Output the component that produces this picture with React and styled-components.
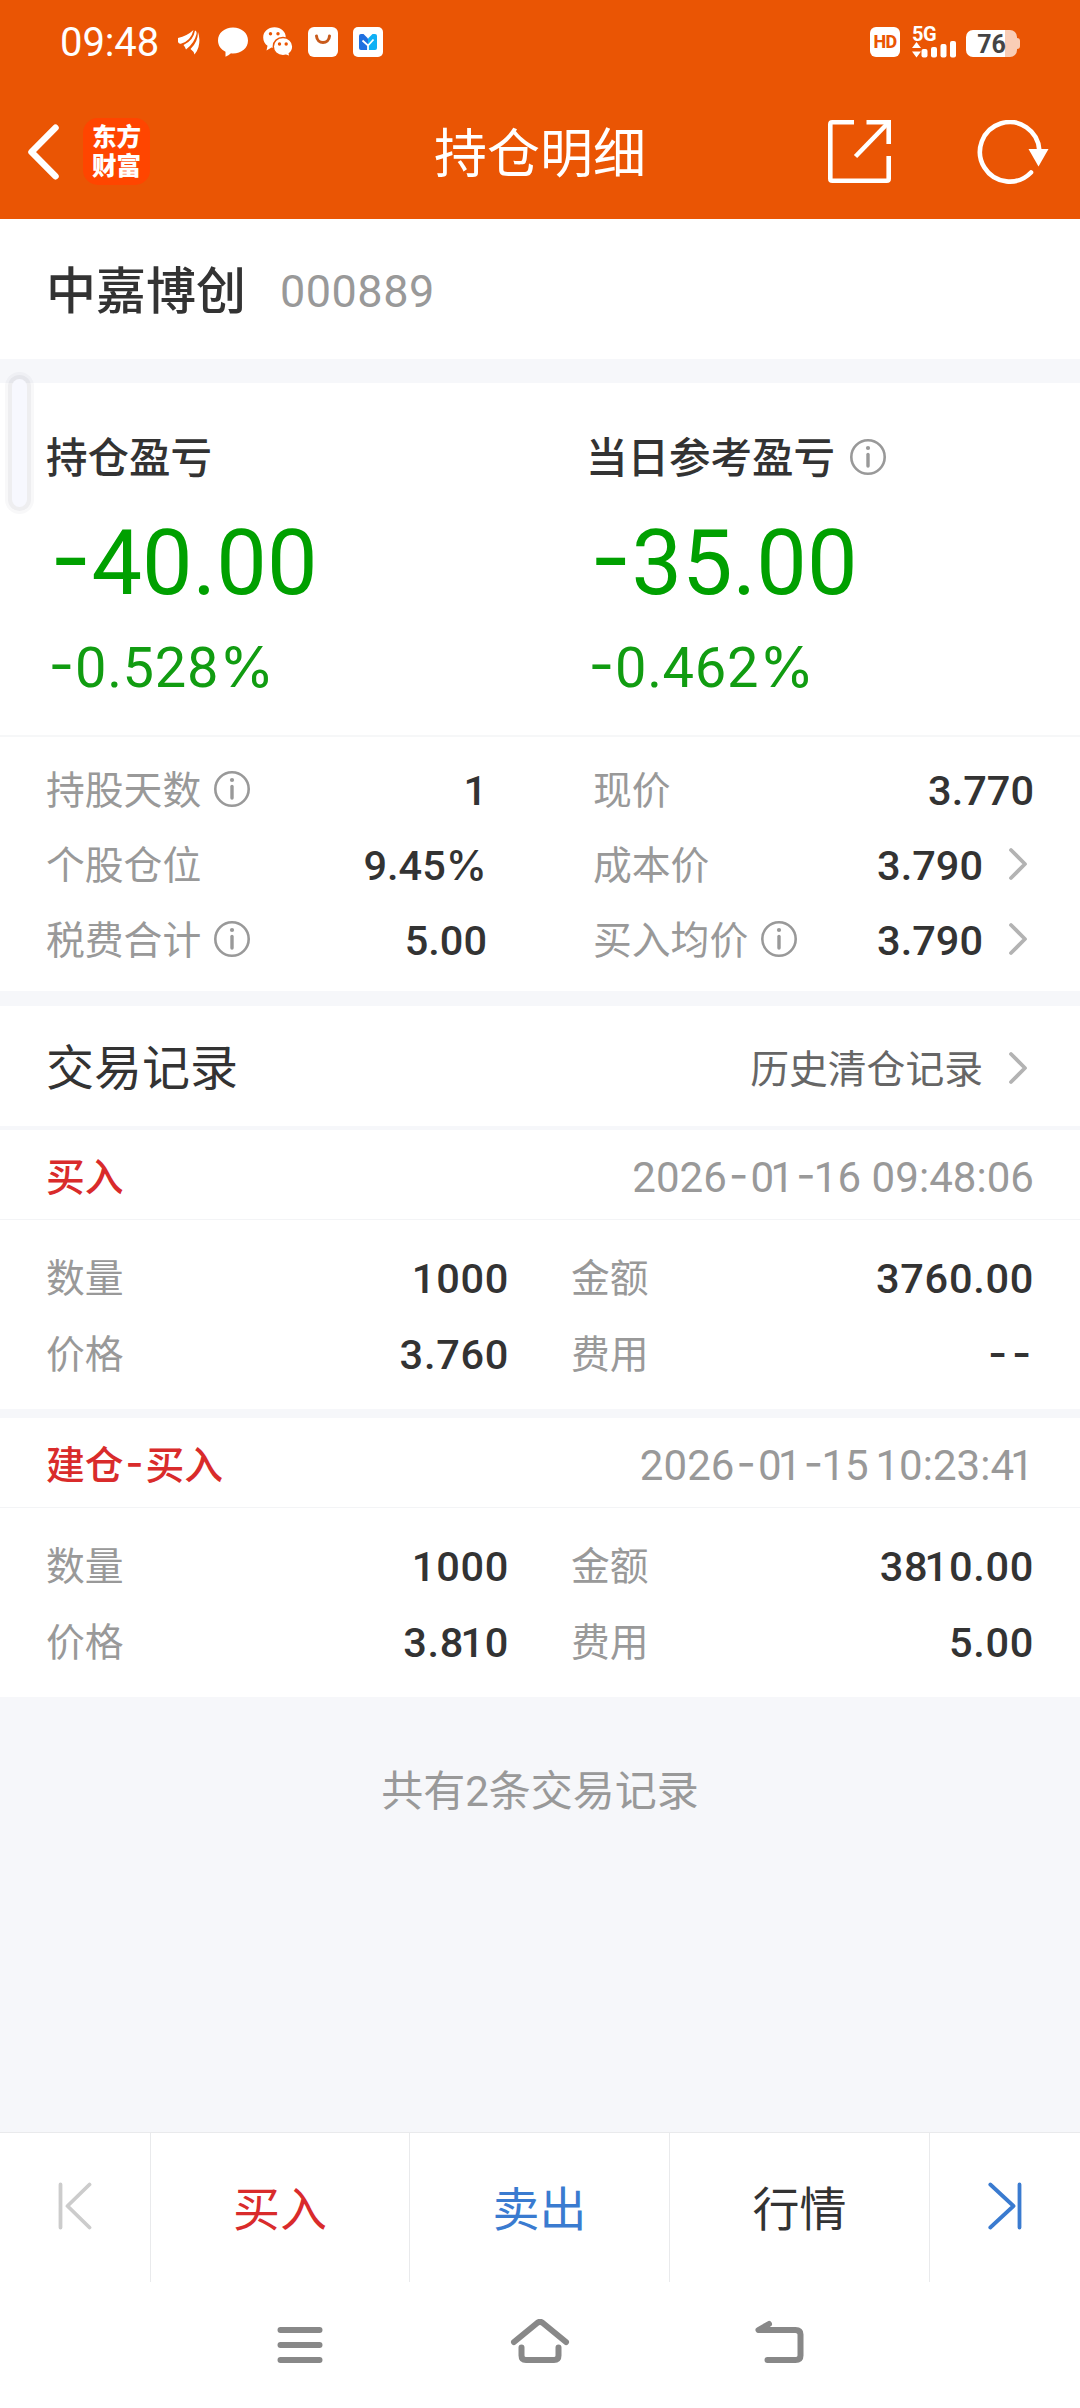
import React from "react";
import styled, { createGlobalStyle } from "styled-components";

const GlobalStyle = createGlobalStyle`
  *, *::before, *::after { box-sizing: border-box; }
  body {
    margin: 0;
    background: #f6f7fa;
    font-family: Roboto, "Noto Sans CJK SC", sans-serif;
    color: #333;
  }
  svg { display: block; flex: none; }
`;

const Page = styled.div`
  width: 1080px;
  height: 2408px;
  display: flex;
  flex-direction: column;
  overflow: hidden;
`;

const Top = styled.header`
  height: 219px;
  background: #ea5504;
  color: #fff;
`;

const StatusBar = styled.div`
  height: 84px;
  padding: 0 60px 0 60px;
  display: flex;
  align-items: center;
`;

const Clock = styled.span`
  width: 117px;
  padding-top: 1px;
  font-size: 40px;
  line-height: 46px;
  letter-spacing: -0.1px;
`;

const StatusIcons = styled.div`
  display: flex;
  gap: 15px;
`;

const StatusRight = styled.div`
  margin-left: auto;
  display: flex;
  align-items: center;
`;

const HdBadge = styled.span`
  width: 30px;
  height: 30px;
  margin-right: 12px;
  border-radius: 6px;
  background: #fff;
  color: #ea5504;
  font: 800 18px/30px Roboto, sans-serif;
  text-align: center;
  letter-spacing: -0.6px;
`;

const Signal = styled.div`
  width: 45px;
  height: 31px;
  margin-right: 9px;
`;

const Network = styled.div`
  height: 15px;
  margin-bottom: 1px;
  font: 700 20px/15px Roboto, sans-serif;
  letter-spacing: -0.4px;
`;

const Battery = styled.div`
  width: 51px;
  height: 27px;
  margin-top: 3px;
  border-radius: 7px;
  background: linear-gradient(90deg, #fff 39px, #f9cdb6 39px);
  color: #444;
  font: 700 25px/29px Roboto, sans-serif;
  text-align: center;
`;

const BatteryTip = styled.i`
  width: 3px;
  height: 11px;
  margin-top: 3px;
  border-radius: 0 3px 3px 0;
  background: #f9cdb6;
`;

const NavBar = styled.div`
  height: 135px;
  padding: 0 27px;
  display: grid;
  grid-template-columns: 1fr auto 1fr;
  align-items: center;
`;

const NavLeft = styled.div`
  display: flex;
  align-items: center;
  gap: 24px;
`;

const NavRight = styled.div`
  display: flex;
  align-items: center;
  justify-content: flex-end;
  gap: 86px;
`;

const Brand = styled.div`
  width: 67px;
  height: 67px;
  padding: 5px 0 0 9px;
  border-radius: 15px;
  background: #ff4500;
  font: 900 24.5px/29px Roboto, "Noto Sans CJK SC", sans-serif;
`;

const Title = styled.h1`
  margin: 7px 0 0;
  font-size: 53px;
  font-weight: 400;
  line-height: 64px;
`;

const StockName = styled.section`
  height: 140px;
  padding: 6px 46px 0;
  display: flex;
  align-items: center;
  gap: 34px;
  background: #fff;
`;

const Name = styled.strong`
  font-size: 50px;
  font-weight: 500;
  line-height: 64px;
`;

const Code = styled.span`
  color: #999;
  font-size: 45px;
  line-height: 64px;
  letter-spacing: 0.5px;
`;

const Band = styled.div`
  flex: none;
  height: ${(p) => p.$h}px;
  background: #f6f7fa;
`;

const HandleLayer = styled.div`
  position: relative;
  height: 0;
`;

const Handle = styled.div`
  position: absolute;
  left: 12px;
  top: -4px;
  width: 15px;
  height: 128px;
  border-radius: 8px;
  background: #f7f8fe;
  box-shadow: 0 0 0 4px rgba(30, 30, 50, 0.045), 0 0 0 7px rgba(30, 30, 50, 0.03);
`;

const Dash = styled.span`
  margin: 0 0.05em;
  font-family: Inter, sans-serif;
  font-feature-settings: "case" 1;
`;

const Percent = styled.span`
  font-family: Inter, sans-serif;
`;

const One = styled.span`
  margin-left: -0.09em;
`;

const ProfitPanel = styled.section`
  height: 354px;
  display: grid;
  grid-template-columns: 540px 540px;
  background: #fff;
  border-bottom: 2px solid #f6f7f8;

  ${Dash} {
    margin: 0 0 0 0.045em;
  }
`;

const Profit = styled.div`
  padding: 51px 0 0 46px;
`;

const ProfitLabel = styled.div`
  height: 50px;
  display: flex;
  align-items: center;
  gap: 15px;
  font-size: 41.5px;
  font-weight: 500;
  line-height: 50px;
`;

const ProfitValue = styled.div`
  height: 110px;
  margin-top: 23px;
  color: #00a000;
  font-size: 90px;
  line-height: 110px;
`;

const ProfitRate = styled.div`
  height: 66px;
  margin-top: 17px;
  color: #119c11;
  font-size: 56px;
  line-height: 66px;
  letter-spacing: 0.7px;
`;

const Details = styled.section`
  height: 254px;
  padding: 16px 46px 0;
  display: grid;
  grid-template-columns: 441px 441px;
  grid-auto-rows: 75px;
  column-gap: 106px;
  background: #fff;
`;

const Field = styled.div`
  display: flex;
  align-items: center;
  min-width: 0;
`;

const FieldLabel = styled.span`
  display: flex;
  align-items: center;
  gap: 13px;
  color: #999;
  font-size: 38.8px;
  line-height: 50px;
`;

const FieldValue = styled.span`
  margin-left: auto;
  font-size: 41.5px;
  font-weight: 500;
  line-height: 50px;
  letter-spacing: ${(p) => p.$spacing || 0}px;
`;

const More = styled.span`
  padding: 0 6px 3px 25px;
`;

const InfoMark = styled.span`
  padding-bottom: 4px;
`;

const RecordsHeader = styled.section`
  height: 120px;
  padding: 5px 46px 0;
  display: flex;
  align-items: center;
  justify-content: space-between;
  background: #fff;
`;

const RecordsTitle = styled.h2`
  margin: 0;
  font-size: 48px;
  font-weight: 400;
  line-height: 60px;
`;

const HistoryLink = styled.a`
  padding-top: 2px;
  display: flex;
  align-items: center;
  color: #666;
  font-size: 38.8px;
  line-height: 56px;
`;

const RecordHead = styled.div`
  height: 90px;
  padding: 6px 46px 0;
  display: flex;
  align-items: center;
  justify-content: space-between;
  background: #fff;
  border-bottom: 1px solid #f3f4f6;
`;

const Side = styled.strong`
  color: #d92b2b;
  font-size: 38.8px;
  font-weight: 500;
  line-height: 50px;
`;

const Time = styled.time`
  color: #999;
  font-size: 42px;
  line-height: 50px;
  letter-spacing: 0.05px;
`;

const RecordBody = styled.div`
  height: 189px;
  padding: 21px 46px 0;
  display: grid;
  grid-template-columns: 463px 463px;
  grid-auto-rows: 76px;
  column-gap: 62px;
  background: #fff;
`;

const Summary = styled.div`
  flex: 1;
  padding-top: 65px;
  color: #999;
  font-size: 42px;
  line-height: 60px;
  text-align: center;
`;

const TabBar = styled.nav`
  height: 150px;
  display: grid;
  grid-template-columns: 151px 259px 260px 260px 150px;
  background: #fff;
  border-top: 1px solid #e9eaec;
`;

const Tab = styled.button`
  display: flex;
  align-items: center;
  justify-content: center;
  padding: ${(p) => (p.$icon ? "0 0 4px" : "5px 0 0")};
  border: 0;
  border-right: 1px solid ${(p) => (p.$last ? "transparent" : "#e9eaec")};
  background: none;
  color: ${(p) => p.$color};
  font: 400 47px/60px Roboto, "Noto Sans CJK SC", sans-serif;
`;

const SystemNav = styled.div`
  height: 126px;
  padding: 37px 276px 0;
  display: flex;
  justify-content: space-between;
  align-items: flex-start;
  background: #fff;
`;

function Num({ children, tight }) {
  return String(children)
    .split(/([-%1])/)
    .map((part, i) => {
      if (part === "-") return <Dash key={i}>-</Dash>;
      if (part === "%") return <Percent key={i}>%</Percent>;
      if (part === "1" && tight) return <One key={i}>1</One>;
      return part;
    });
}

const InfoIcon = () => (
  <InfoMark>
    <svg width="36" height="36" viewBox="0 0 36 36" fill="none" stroke="#999">
      <circle cx="18" cy="18" r="16.7" strokeWidth="2.6" />
      <path d="M18 15.5V27" strokeWidth="3.4" strokeLinecap="round" />
      <circle cx="18" cy="9" r="2.1" fill="#999" stroke="none" />
    </svg>
  </InfoMark>
);

const Chevron = () => (
  <svg width="20" height="34" viewBox="0 0 20 34" fill="none" stroke="#b3b3b3" strokeWidth="3.8" strokeLinecap="round" strokeLinejoin="round">
    <path d="M3 3L17 17L3 31" />
  </svg>
);

const BackIcon = () => (
  <svg width="32" height="56" viewBox="0 0 32 56" fill="none" stroke="#fff" strokeWidth="6.5" strokeLinecap="round" strokeLinejoin="round">
    <path d="M28.5 3.8L4.5 28L28.5 52.2" />
  </svg>
);

const ShareIcon = () => (
  <svg width="63" height="63" viewBox="0 0 63 63" fill="none" stroke="#fff" strokeWidth="4.6" strokeLinejoin="round">
    <path d="M26 2.3H4.3Q2.3 2.3 2.3 4.3V58.7Q2.3 60.7 4.3 60.7H58.7Q60.7 60.7 60.7 58.7V36" />
    <path d="M38.5 2.3H60.7V24" strokeLinejoin="miter" />
    <path d="M60 3L27.5 36.5" />
  </svg>
);

const RefreshIcon = () => (
  <svg width="76" height="64" viewBox="0 0 76 64" fill="none">
    <path d="M62.3 30A29.7 29.7 0 1 0 54 52.5" stroke="#fff" strokeWidth="4.6" strokeLinecap="round" />
    <path d="M51.5 29H71.5L61.5 46.5Z" fill="#fff" />
  </svg>
);

const WingIcon = () => (
  <svg width="26" height="30" viewBox="0 0 26 30" fill="#fff">
    <path d="M1 11Q10 9 16.5 3Q14 13.5 4.5 16.5Q2 17.5 1 15Z" />
    <path d="M18 3.5Q20 4 19.5 7Q17.5 16 9 22.5Q8 19.5 6.5 18Q16.5 13.5 18 3.5Z" />
    <path d="M21 5Q23.5 13 21.5 20Q20 25 17.5 27.5Q17 24.5 13.5 22Q21 15 21 5Z" />
  </svg>
);

const ChatIcon = () => (
  <svg width="30" height="30" viewBox="0 0 30 30" fill="#fff">
    <path d="M15 0.5C23.5 0.5 30 6 30 13.5C30 21 23.5 26.5 15 26.5Q14 26.5 13 26.3Q10.5 28.5 7.5 29.7V24.7C3 22.5 0 18.5 0 13.5C0 6 6.5 0.5 15 0.5Z" />
  </svg>
);

const PairChatIcon = () => (
  <svg width="30" height="30" viewBox="0 0 30 30">
    <path d="M11.5 0.3C18 0.3 22.8 4.6 22.8 10.5C22.8 16.5 18 21 11.5 21L8.5 20.6L3.5 23.5L4.5 18.8C1.8 17 0.2 14 0.2 10.5C0.2 4.6 5 0.3 11.5 0.3Z" fill="#fff" />
    <circle cx="7.5" cy="6.8" r="1.7" fill="#ea5504" />
    <circle cx="15" cy="6.8" r="1.7" fill="#ea5504" />
    <path d="M20 10.5C25.7 10.5 29.8 14.5 29.8 19.5C29.8 22.5 28.5 25 26.3 26.6L27 29.7L23 28.2Q21.5 28.6 20 28.6C14.3 28.6 10.3 24.6 10.3 19.5C10.3 14.5 14.3 10.5 20 10.5Z" fill="#fff" stroke="#ea5504" strokeWidth="1.4" />
    <circle cx="16.5" cy="17" r="1.7" fill="#ea5504" />
    <circle cx="23.2" cy="17" r="1.7" fill="#ea5504" />
  </svg>
);

const BagIcon = () => (
  <svg width="30" height="30" viewBox="0 0 30 30">
    <rect width="30" height="30" rx="6" fill="#fff" />
    <path d="M8.5 9C9 17.5 21 17.5 21.5 9" fill="none" stroke="#c85a1c" strokeWidth="3" strokeLinecap="round" />
  </svg>
);

const MapIcon = () => (
  <svg width="30" height="30" viewBox="0 0 30 30">
    <rect width="30" height="30" rx="5" fill="#fff" />
    <path d="M6 9Q6 7 8 7H10.5L15 11.5V23H8Q6 23 6 21Z" fill="#2070e0" />
    <path d="M15 11.5L19.5 7H22Q24 7 24 9V21Q24 23 22 23H15Z" fill="#10b0f5" />
    <path d="M9.5 13.5L15 18.5L20.5 12.5M15 18V23" fill="none" stroke="#fff" strokeWidth="1.8" />
  </svg>
);

const SignalBars = () => (
  <svg width="45" height="17" viewBox="0 0 45 17" fill="#fff" overflow="visible">
    <path d="M4.5 -1L9 5H0ZM4.5 14.500L0 8.500H9Z" />
    <rect x="9.5" y="6" width="6" height="8.500" rx="2" />
    <rect x="19" y="4" width="6" height="10.500" rx="2" />
    <rect x="28.5" y="1" width="6" height="13.500" rx="2" />
    <rect x="38" y="-2" width="6" height="16.500" rx="2" />
  </svg>
);

const EdgeIcon = ({ color, flip }) => (
  <svg width="34" height="48" viewBox="0 0 34 48" fill="none" stroke={color} strokeWidth="3.8" strokeLinecap="round" strokeLinejoin="round">
    <path d={flip ? "M2.3 2.5L25.5 24L2.3 45.5M31.5 2.5V45.5" : "M31.5 2.5L9.5 24L31.5 45.5M2.5 2.5V45.5"} />
  </svg>
);

const MenuIcon = () => (
  <svg width="48" height="44" viewBox="0 0 48 44" stroke="#888" strokeWidth="6" strokeLinecap="round">
    <path d="M4.5 11H43.5M4.5 26H43.5M4.5 41H43.5" />
  </svg>
);

const HomeIcon = () => (
  <svg width="60" height="46" viewBox="0 0 60 46" fill="none" stroke="#888" strokeWidth="6" strokeLinecap="round" strokeLinejoin="round">
    <path d="M4 23L27.5 3.7Q30 2 32.5 3.7L56 23M11.5 28.5V36.5Q11.5 41 16 41H44Q48.5 41 48.5 36.5V28.5" />
  </svg>
);

const ReturnIcon = () => (
  <svg width="49" height="46" viewBox="0 0 49 46" fill="none" stroke="#888" strokeWidth="6" strokeLinecap="round" strokeLinejoin="round">
    <path d="M14 5L3.5 11H40.5Q45.5 11 45.5 15.5V36.5Q45.5 41 40.5 41H12.5" />
  </svg>
);

const details = [
  { label: "持股天数", info: true, value: "1" },
  { label: "现价", value: "3.770" },
  { label: "个股仓位", value: "9.45%" },
  { label: "成本价", value: "3.790", more: true },
  { label: "税费合计", info: true, value: "5.00" },
  { label: "买入均价", info: true, value: "3.790", more: true },
];

const records = [
  {
    side: "买入",
    time: "2026-01-16 09:48:06",
    fields: [["数量", "1000"], ["金额", "3760.00"], ["价格", "3.760"], ["费用", "--"]],
  },
  {
    side: "建仓-买入",
    time: "2026-01-15 10:23:41",
    fields: [["数量", "1000"], ["金额", "3810.00"], ["价格", "3.810"], ["费用", "5.00"]],
  },
];

export default function App() {
  return (
    <>
      <GlobalStyle />
      <Page>
        <Top>
          <StatusBar>
            <Clock>09:48</Clock>
            <StatusIcons>
              <WingIcon />
              <ChatIcon />
              <PairChatIcon />
              <BagIcon />
              <MapIcon />
            </StatusIcons>
            <StatusRight>
              <HdBadge>HD</HdBadge>
              <Signal>
                <Network>5G</Network>
                <SignalBars />
              </Signal>
              <Battery>76</Battery>
              <BatteryTip />
            </StatusRight>
          </StatusBar>
          <NavBar>
            <NavLeft>
              <BackIcon />
              <Brand>东方<br />财富</Brand>
            </NavLeft>
            <Title>持仓明细</Title>
            <NavRight>
              <ShareIcon />
              <RefreshIcon />
            </NavRight>
          </NavBar>
        </Top>

        <StockName>
          <Name>中嘉博创</Name>
          <Code>000889</Code>
        </StockName>
        <Band $h={24} />
        <HandleLayer><Handle /></HandleLayer>

        <ProfitPanel>
          <Profit>
            <ProfitLabel>持仓盈亏</ProfitLabel>
            <ProfitValue><Num>-40.00</Num></ProfitValue>
            <ProfitRate><Num>-0.528%</Num></ProfitRate>
          </Profit>
          <Profit>
            <ProfitLabel>当日参考盈亏<InfoIcon /></ProfitLabel>
            <ProfitValue><Num>-35.00</Num></ProfitValue>
            <ProfitRate><Num>-0.462%</Num></ProfitRate>
          </Profit>
        </ProfitPanel>

        <Details>
          {details.map((d) => (
            <Field key={d.label}>
              <FieldLabel>{d.label}{d.info && <InfoIcon />}</FieldLabel>
              <FieldValue><Num>{d.value}</Num></FieldValue>
              {d.more && <More><Chevron /></More>}
            </Field>
          ))}
        </Details>
        <Band $h={15} />

        <RecordsHeader>
          <RecordsTitle>交易记录</RecordsTitle>
          <HistoryLink>历史清仓记录<More><Chevron /></More></HistoryLink>
        </RecordsHeader>

        {records.map((r, i) => (
          <React.Fragment key={r.time}>
            <Band $h={i === 0 ? 4 : 9} />
            <RecordHead>
              <Side><Num>{r.side}</Num></Side>
              <Time><Num tight>{r.time}</Num></Time>
            </RecordHead>
            <RecordBody>
              {r.fields.map(([label, value]) => (
                <Field key={label}>
                  <FieldLabel>{label}</FieldLabel>
                  <FieldValue $spacing={0.7}><Num tight>{value}</Num></FieldValue>
                </Field>
              ))}
            </RecordBody>
          </React.Fragment>
        ))}

        <Summary>共有2条交易记录</Summary>

        <TabBar>
          <Tab $icon><EdgeIcon color="#ccc" /></Tab>
          <Tab $color="#d92b2b">买入</Tab>
          <Tab $color="#3a7bd0">卖出</Tab>
          <Tab $color="#333">行情</Tab>
          <Tab $icon $last><EdgeIcon color="#3a7bd0" flip /></Tab>
        </TabBar>
        <SystemNav>
          <MenuIcon />
          <HomeIcon />
          <ReturnIcon />
        </SystemNav>
      </Page>
    </>
  );
}
